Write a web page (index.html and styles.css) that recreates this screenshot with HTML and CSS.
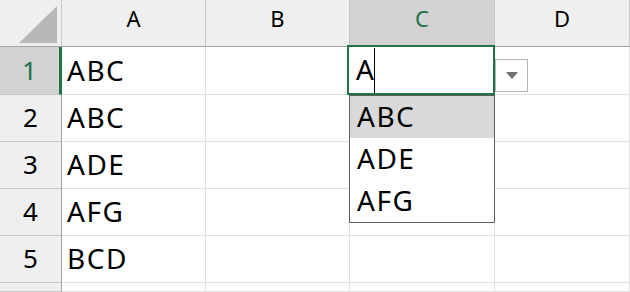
FILE: index.html
```html
<!DOCTYPE html>
<html lang="ja">
<head>
  <meta charset="UTF-8" />
  <title>Sheet - autocomplete</title>
  <link rel="stylesheet" href="styles.css">
</head>
<body>

  <div class="sheet">
    <!-- column headers -->
    <div class="corner">
      <svg width="61" height="46" viewBox="0 0 61 46"><polygon points="19,43 57,43 57,6" fill="#b8b8b8"/></svg>
    </div>
    <div class="col-head">A</div>
    <div class="col-head">B</div>
    <div class="col-head active">C</div>
    <div class="col-head">D</div>

    <!-- rows -->
    <div class="row-head active">1</div>
    <div class="cell">ABC</div>
    <div class="cell"></div>
    <div class="cell"></div>
    <div class="cell"></div>

    <div class="row-head">2</div>
    <div class="cell">ABC</div>
    <div class="cell"></div>
    <div class="cell"></div>
    <div class="cell"></div>

    <div class="row-head">3</div>
    <div class="cell">ADE</div>
    <div class="cell"></div>
    <div class="cell"></div>
    <div class="cell"></div>

    <div class="row-head">4</div>
    <div class="cell">AFG</div>
    <div class="cell"></div>
    <div class="cell"></div>
    <div class="cell"></div>

    <div class="row-head">5</div>
    <div class="cell">BCD</div>
    <div class="cell"></div>
    <div class="cell"></div>
    <div class="cell"></div>

    <div class="row-head"></div>
    <div class="cell"></div>
    <div class="cell"></div>
    <div class="cell"></div>
    <div class="cell"></div>

    <!-- editing C1 -->
    <div class="editor"><span class="typed">A</span><span class="caret"></span></div>
    <div class="drop-btn"><span class="arrow"></span></div>
    <ul class="suggest">
      <li class="hit">ABC</li>
      <li>ADE</li>
      <li>AFG</li>
    </ul>
  </div>

</body>
</html>
```

FILE: styles.css
```css
html, body {
  margin: 0;
  height: 100%;
  overflow: hidden;
  background-color: #fff;
}

.sheet {
  position: relative;
  display: grid;
  grid-template-columns: 62px 144px 144px 145px 1fr;
  grid-template-rows: 47px 48px 47px 47px 47px 47px 1fr;
  height: 292px;
  font-family: "Noto Sans", "Noto Sans CJK JP", sans-serif;
  color: #000;
}

.sheet > div {
  box-sizing: border-box;
}

.corner {
  background-color: #efefef;
  border-right: 1px solid #c8c8c8;
  border-bottom: 1px solid #a3a3a3;
}

.corner svg {
  display: block;
}

.col-head {
  display: flex;
  align-items: center;
  justify-content: center;
  padding-bottom: 10px;
  background-color: #efefef;
  border-right: 1px solid #c8c8c8;
  border-bottom: 1px solid #a3a3a3;
  font-size: 22px;
}

.col-head.active {
  background-color: #d2d2d2;
  color: #217346;
}

.row-head {
  display: flex;
  align-items: center;
  justify-content: center;
  padding-bottom: 2px;
  background-color: #efefef;
  border-right: 1px solid #a3a3a3;
  border-bottom: 1px solid #c8c8c8;
  font-size: 26px;
}

.row-head.active {
  background-color: #d2d2d2;
  color: #217346;
  border-right: 3px solid #217346;
}

.cell {
  display: flex;
  align-items: center;
  padding: 0 0 2px 5px;
  border-right: 1px solid #e1e1e1;
  border-bottom: 1px solid #e1e1e1;
  font-size: 28px;
  letter-spacing: 1.5px;
}

.editor {
  position: absolute;
  left: 347px;
  top: 45px;
  width: 148px;
  height: 50px;
  box-sizing: border-box;
  border: 2px solid #217346;
  background-color: #fff;
  display: flex;
  align-items: center;
  padding: 0 0 3px 7px;
  font-size: 28px;
}

.caret {
  width: 1px;
  height: 45px;
  margin-top: 3px;
  background-color: #000;
}

.drop-btn {
  position: absolute;
  left: 495px;
  top: 59px;
  width: 33px;
  height: 33px;
  box-sizing: border-box;
  border: 1px solid #b5b5b5;
  background-color: #fff;
  display: flex;
  align-items: center;
  justify-content: center;
}

.arrow {
  width: 0;
  height: 0;
  border-left: 6.5px solid transparent;
  border-right: 6.5px solid transparent;
  border-top: 7px solid #707070;
}

.suggest {
  position: absolute;
  left: 349px;
  top: 95px;
  width: 146px;
  margin: 0;
  padding: 0;
  list-style: none;
  box-sizing: border-box;
  border: 1px solid #5f5f5f;
  background-color: #fff;
}

.suggest li {
  height: 42px;
  display: flex;
  align-items: center;
  padding: 0 0 3px 7px;
  box-sizing: border-box;
  font-size: 28px;
  letter-spacing: 1.5px;
}

.suggest li.hit {
  background-color: #d9d9d9;
}
```
